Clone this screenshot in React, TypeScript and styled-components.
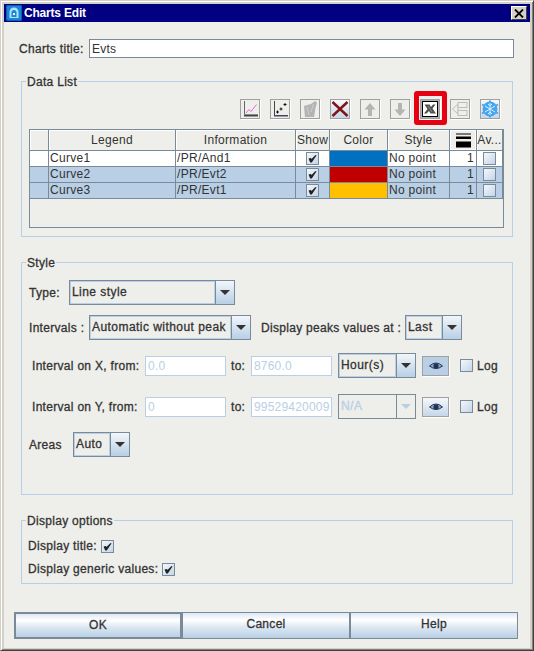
import React from "react";
import styled, { createGlobalStyle } from "styled-components";

const GlobalStyle = createGlobalStyle`
  html, body {
    margin: 0;
    padding: 0;
    background: #d4d0c8;
  }
  body {
    font-family: "Liberation Sans", Arial, sans-serif;
    font-size: 12px;
    color: #333333;
  }
`;

const BORDER = "#7a8a99";
const PALE = "#b8cfe5";
const LABEL = "-webkit-text-stroke: 0.3px #333333; letter-spacing: 0.3px;";

/* window frame */

const Frame = styled.div`
  box-sizing: border-box;
  width: 534px;
  height: 651px;
  display: flex;
  flex-direction: column;
  padding: 3px 3px 2px 3px;
  background: #d4d0c8;
  border-top: 1px solid #d4d0c8;
  border-left: 1px solid #d4d0c8;
  border-right: 1px solid #404040;
  border-bottom: 1px solid #404040;
  box-shadow: inset 1px 1px 0 #ffffff, inset -1px -1px 0 #808080;
`;

const TitleBar = styled.div`
  height: 18px;
  flex: none;
  display: flex;
  align-items: center;
  padding: 0 3px 0 2px;
  gap: 2px;
  background: #000080;
  color: #ffffff;
  font-weight: bold;
  font-size: 12px;
  letter-spacing: -0.2px;
`;

const TitleText = styled.span`
  flex: 1;
`;

const CloseBox = styled.div`
  width: 16px;
  height: 14px;
  box-sizing: border-box;
  background: #d4d0c8;
  border: 1px solid;
  border-color: #ffffff #404040 #404040 #ffffff;
  display: flex;
  align-items: center;
  justify-content: center;
`;

const Body = styled.div`
  flex: 1;
  display: flex;
  flex-direction: column;
  background: #eeefea;
  padding: 17px 12px 0 12px;
`;

/* shared controls */

const Label = styled.span<{ $w?: number; $ml?: number }>`
  ${LABEL}
  white-space: nowrap;
  margin-left: ${(p) => p.$ml ?? 0}px;
  ${(p) => (p.$w ? `width: ${p.$w}px; flex: none;` : "")}
`;

const TextField = styled.div<{ $w?: number; $off?: boolean }>`
  box-sizing: border-box;
  height: ${(p) => (p.$off ? 20 : 19)}px;
  ${(p) => (p.$w ? `width: ${p.$w}px; flex: none;` : "flex: 1;")}
  padding-left: 2px;
  line-height: 18px;
  background: #ffffff;
  overflow: hidden;
  white-space: nowrap;
  letter-spacing: 0.2px;
  color: ${(p) => (p.$off ? PALE : "#333333")};
  border: 1px solid ${(p) => (p.$off ? PALE : BORDER)};
`;

const Combo = styled.div<{ $w: number; $btn?: number; $ml?: number }>`
  box-sizing: border-box;
  width: ${(p) => p.$w}px;
  height: 25px;
  flex: none;
  margin-left: ${(p) => p.$ml ?? 0}px;
  display: grid;
  grid-template-columns: 1fr ${(p) => p.$btn ?? 19}px;
  border: 1px solid ${BORDER};
  background: #eeefea;
`;

const ComboText = styled.div<{ $off?: boolean }>`
  ${LABEL}
  letter-spacing: 0.45px;
  padding-left: 1px;
  line-height: 21px;
  overflow: hidden;
  white-space: nowrap;
  border: 1px solid ${(p) => (p.$off ? "#eeefea" : PALE)};
  color: ${(p) => (p.$off ? PALE : "#333333")};
  -webkit-text-stroke-color: ${(p) => (p.$off ? PALE : "#333333")};
`;

const ComboArrow = styled.div<{ $off?: boolean }>`
  border-left: 1px solid ${BORDER};
  display: flex;
  align-items: center;
  justify-content: center;
  background: ${(p) =>
    p.$off ? "#eeefea" : "linear-gradient(#f2f6fa, #b8cfe5)"};
  &::after {
    content: "";
    border-left: 5px solid transparent;
    border-right: 5px solid transparent;
    border-top: 5px solid ${(p) => (p.$off ? PALE : "#333333")};
  }
`;

const CheckBox = styled.div<{ $ml?: number }>`
  box-sizing: border-box;
  width: 13px;
  height: 13px;
  flex: none;
  margin-left: ${(p) => p.$ml ?? 0}px;
  border: 1px solid ${BORDER};
  background: linear-gradient(135deg, #f4f7fb, #c4d5e8);
  display: flex;
  align-items: center;
  justify-content: center;
`;

const Group = styled.fieldset<{ $h: number; $mt?: number }>`
  box-sizing: border-box;
  height: ${(p) => p.$h}px;
  flex: none;
  margin: ${(p) => p.$mt ?? 0}px 0 0 5px;
  width: 492px;
  padding: 0;
  min-width: 0;
  border: 1px solid ${PALE};
  position: relative;
`;

const GroupTitle = styled.legend`
  ${LABEL}
  padding: 0 1px;
  margin-left: 4px;
  line-height: 16px;
  height: 14px;
`;

/* charts title */

const TitleRow = styled.div`
  display: flex;
  align-items: center;
  height: 19px;
  margin: 0 4px 16px 3px;
`;

/* data list */

const Toolbar = styled.div`
  display: flex;
  justify-content: flex-end;
  gap: 10px;
  height: 20px;
  margin: 11px 12px 10px 0;
  position: relative;
`;

const ToolButton = styled.div<{ $bg?: "flat" | "shade" | "dark" }>`
  box-sizing: border-box;
  width: 20px;
  height: 20px;
  flex: none;
  background: ${(p) =>
    p.$bg === "dark"
      ? "#b0b0b0"
      : p.$bg === "shade"
        ? "linear-gradient(#f6f8fb, #c6d7e9)"
        : "#eeefea"};
  border: 1px solid #a0a0a0;
  box-shadow: 1px 1px 0 #ffffff;
  display: flex;
  align-items: center;
  justify-content: center;
`;

const Highlight = styled.div`
  position: absolute;
  box-sizing: border-box;
  top: -8px;
  right: 53px;
  width: 33px;
  height: 34px;
  border: 5px solid #e60012;
  border-radius: 3px;
`;

const Table = styled.div`
  box-sizing: border-box;
  margin-left: 7px;
  width: 475px;
  height: 99px;
  border: 1px solid ${BORDER};
  background: #eeefea;
`;

const COLUMNS = "19px 127px 120px 34px 58px 62px 27px 26px";

const HeadRow = styled.div`
  display: grid;
  grid-template-columns: ${COLUMNS};
  height: 20px;
  border-bottom: 1px solid ${BORDER};
`;

const HeadCell = styled.div`
  box-sizing: border-box;
  border-right: 1px solid ${BORDER};
  background: #eeefea;
  box-shadow: inset 1px 1px 0 #ffffff;
  text-align: center;
  line-height: 21px;
  white-space: nowrap;
  overflow: hidden;
  letter-spacing: 0.3px;
`;

const WidthHead = styled(HeadCell)`
  display: flex;
  align-items: center;
  justify-content: center;
  box-shadow: inset 0 0 0 1px #ffffff;
`;

const DataRow = styled.div<{ $sel?: boolean }>`
  display: grid;
  grid-template-columns: ${COLUMNS};
  height: 16px;
  box-sizing: border-box;
  border-bottom: 1px solid ${BORDER};
  background: ${(p) => (p.$sel ? PALE : "#ffffff")};
`;

const Cell = styled.div<{ $right?: boolean; $center?: boolean }>`
  box-sizing: border-box;
  border-right: 1px solid ${BORDER};
  line-height: 15px;
  overflow: hidden;
  white-space: nowrap;
  padding: 0 1px;
  letter-spacing: 0.3px;
  ${(p) => (p.$right ? "text-align: right; padding-right: 2px;" : "")}
  ${(p) =>
    p.$center
      ? "display: flex; align-items: center; justify-content: center;"
      : ""}
`;

const Swatch = styled.div<{ $color: string }>`
  box-sizing: border-box;
  border-right: 1px solid ${BORDER};
  background: ${(p) => p.$color};
`;

/* style group */

const StyleRow = styled.div<{ $mt?: number; $mb: number; $pl?: number }>`
  display: flex;
  align-items: center;
  height: 25px;
  margin: ${(p) => p.$mt ?? 0}px 0 ${(p) => p.$mb}px ${(p) => p.$pl ?? 7}px;
`;

const EyeButton = styled.div<{ $active?: boolean }>`
  box-sizing: border-box;
  width: 27px;
  height: 20px;
  flex: none;
  margin-left: 6px;
  border: 1px solid #a0a0a0;
  box-shadow: 1px 1px 0 #ffffff;
  background: ${(p) =>
    p.$active ? PALE : "linear-gradient(#f4f7fb, #c6d7e9)"};
  display: flex;
  align-items: center;
  justify-content: center;
`;

const OptionRow = styled.div<{ $mt?: number; $mb: number }>`
  display: flex;
  align-items: center;
  gap: 4px;
  height: 14px;
  margin: ${(p) => p.$mt ?? 0}px 0 ${(p) => p.$mb}px 6px;
`;

/* bottom buttons */

const Buttons = styled.div`
  display: grid;
  grid-template-columns: 168px 168px 168px;
  margin: 28px 0 0 -2px;
  height: 25px;
`;

const Action = styled.div<{ $focus?: boolean }>`
  ${LABEL}
  box-sizing: border-box;
  border: ${(p) => (p.$focus ? 2 : 1)}px solid ${BORDER};
  background: linear-gradient(#dde8f3 0%, #ffffff 28%, #dfe9f3 55%, #b8cfe5 100%);
  text-align: center;
  line-height: 23px;
`;

/* drawings */

const Check = () => (
  <svg width="9" height="9" viewBox="0 0 9 9">
    <path d="M0.5 4.5 L3 4 L3.5 5 L7.5 1 L8.5 1.5 L3.8 8.5 L2.2 8.5 Z" fill="#222222" />
  </svg>
);

const Eye = () => (
  <svg width="14" height="8" viewBox="0 0 14 8">
    <path d="M0.5 4 Q7 -2 13.5 4 Q7 9 0.5 4 Z" fill="#8fa8c4" stroke="#223355" strokeWidth="1" />
    <circle cx="7" cy="4" r="2.6" fill="#223355" />
  </svg>
);

const AppIcon = () => (
  <svg width="16" height="16" viewBox="0 0 16 16">
    <rect width="16" height="16" rx="2" fill="#1b86d6" />
    <rect x="0.5" y="0.5" width="15" height="15" rx="2" fill="none" stroke="#0b5fa8" />
    <path d="M3.5 13 V7 A4.5 4.5 0 0 1 12.5 7 V13 Z" fill="#a9e2fb" />
    <path d="M5.5 12 V7.5 A2.5 2.5 0 0 1 10.5 7.5 V12 Z" fill="#1b86d6" />
    <rect x="7" y="8" width="2" height="2" fill="#ffffff" />
  </svg>
);

const CloseGlyph = () => (
  <svg width="10" height="9" viewBox="0 0 10 9">
    <path d="M1 0.5 L9 8.5 M9 0.5 L1 8.5" stroke="#000000" strokeWidth="1.8" />
  </svg>
);

const LineChart = () => (
  <svg width="18" height="18" viewBox="0 0 18 18">
    <rect x="3" y="1" width="1" height="15" fill="#666666" />
    <rect x="3" y="14" width="14" height="1" fill="#8a8a8a" />
    <rect x="3" y="15" width="14" height="1.5" fill="#444444" />
    <path d="M5 13 L8 9.5 L10 11.5 L15.5 4.5" stroke="#f060e0" strokeWidth="1" fill="none" />
  </svg>
);

const PointChart = () => (
  <svg width="18" height="18" viewBox="0 0 18 18">
    <rect x="3" y="1" width="1" height="15" fill="#444444" />
    <rect x="3" y="15" width="14" height="1.5" fill="#444466" />
    <path
      d="M5 12h3M6.5 10.5v3M8.5 9h3M10 7.5v3M12.5 4.5h3M14 3v3"
      stroke="#111111"
      strokeWidth="1"
      fill="none"
    />
  </svg>
);

const Pencil = () => (
  <svg width="18" height="18" viewBox="0 0 18 18">
    <path d="M3 6 L10 4 L14 1 L16 2.5 L14.5 8 L13 17 L4 17 Z" fill="#b4b4b4" />
    <path d="M6 7 L8 15 M12.5 4 L10 12" stroke="#cfcfcf" fill="none" />
  </svg>
);

const RedCross = () => (
  <svg width="18" height="18" viewBox="0 0 18 18">
    <path d="M1.5 2 L16.5 16 M16.5 2 L1.5 16" stroke="#7e1414" strokeWidth="2.4" />
  </svg>
);

const ArrowUp = () => (
  <svg width="14" height="15" viewBox="0 0 14 15">
    <path d="M7 1 L12.5 7.5 H9 V14 H5 V7.5 H1.5 Z" fill="#b4b4b4" />
  </svg>
);

const ArrowDown = () => (
  <svg width="14" height="15" viewBox="0 0 14 15">
    <path d="M7 14 L12.5 7.5 H9 V1 H5 V7.5 H1.5 Z" fill="#b4b4b4" />
  </svg>
);

const ExportIcon = () => (
  <svg width="16" height="16" viewBox="0 0 16 16">
    <rect x="0.5" y="0.5" width="15" height="15" fill="#ffffff" stroke="#000000" />
    <path d="M2.5 3.5 H7.5 L9 6 L11 3.5 H13.5 L10.5 7.5 L14 12.5 H8.5 L7 10 L4.5 12.5 H2 L5.5 8 Z" fill="#4f4f4f" />
    <path d="M6 5 L10 11" stroke="#808080" strokeWidth="1.2" />
  </svg>
);

const ImportIcon = () => (
  <svg width="18" height="18" viewBox="0 0 18 18">
    <path d="M1.5 9 L7 4 V14 Z" fill="none" stroke="#bdbdbd" />
    <rect x="7" y="2.5" width="9" height="5" fill="#eeefea" stroke="#bdbdbd" />
    <rect x="7" y="10.5" width="9" height="5" fill="#eeefea" stroke="#bdbdbd" />
  </svg>
);

const Snowflake = () => (
  <svg width="18" height="18" viewBox="0 0 18 18">
    <circle cx="9" cy="9" r="7.5" fill="#45a6ee" />
    <path
      d="M9 0.5 V17.5 M1 4.5 L17 13.5 M17 4.5 L1 13.5"
      stroke="#45a6ee"
      strokeWidth="2"
      fill="none"
    />
    <path
      d="M9 3 V15 M4 6 L14 12 M14 6 L4 12 M7 4 L9 6 L11 4 M7 14 L9 12 L11 14"
      stroke="#d5efff"
      strokeWidth="1"
      fill="none"
    />
  </svg>
);

const WidthGlyph = () => (
  <svg width="15" height="15" viewBox="0 0 15 15">
    <rect x="0" y="0.5" width="15" height="1" fill="#000000" />
    <rect x="0" y="3.5" width="15" height="2.5" fill="#000000" />
    <rect x="0" y="8.5" width="15" height="6" fill="#000000" />
  </svg>
);

const rows = [
  { legend: "Curve1", info: "/PR/And1", color: "#0070c0", sel: false },
  { legend: "Curve2", info: "/PR/Evt2", color: "#c00000", sel: true },
  { legend: "Curve3", info: "/PR/Evt1", color: "#ffc000", sel: true },
];

export default function App() {
  return (
    <>
      <GlobalStyle />
      <Frame>
        <TitleBar>
          <AppIcon />
          <TitleText>Charts Edit</TitleText>
          <CloseBox>
            <CloseGlyph />
          </CloseBox>
        </TitleBar>
        <Body>
          <TitleRow>
            <Label $w={70}>Charts title:</Label>
            <TextField>Evts</TextField>
          </TitleRow>

          <Group $h={163}>
            <GroupTitle>Data List</GroupTitle>
            <Toolbar>
              <ToolButton><LineChart /></ToolButton>
              <ToolButton><PointChart /></ToolButton>
              <ToolButton><Pencil /></ToolButton>
              <ToolButton $bg="shade"><RedCross /></ToolButton>
              <ToolButton><ArrowUp /></ToolButton>
              <ToolButton><ArrowDown /></ToolButton>
              <ToolButton $bg="dark"><ExportIcon /></ToolButton>
              <ToolButton><ImportIcon /></ToolButton>
              <ToolButton $bg="shade"><Snowflake /></ToolButton>
              <Highlight />
            </Toolbar>
            <Table>
              <HeadRow>
                <HeadCell />
                <HeadCell>Legend</HeadCell>
                <HeadCell>Information</HeadCell>
                <HeadCell>Show</HeadCell>
                <HeadCell>Color</HeadCell>
                <HeadCell>Style</HeadCell>
                <WidthHead><WidthGlyph /></WidthHead>
                <HeadCell>Av...</HeadCell>
              </HeadRow>
              {rows.map((r) => (
                <DataRow key={r.legend} $sel={r.sel}>
                  <Cell />
                  <Cell>{r.legend}</Cell>
                  <Cell>{r.info}</Cell>
                  <Cell $center>
                    <CheckBox><Check /></CheckBox>
                  </Cell>
                  <Swatch $color={r.color} />
                  <Cell>No point</Cell>
                  <Cell $right>1</Cell>
                  <Cell $center>
                    <CheckBox />
                  </Cell>
                </DataRow>
              ))}
            </Table>
          </Group>

          <Group $h={240} $mt={18}>
            <GroupTitle>Style</GroupTitle>
            <StyleRow $mt={11} $mb={10}>
              <Label $w={40}>Type:</Label>
              <Combo $w={166}>
                <ComboText>Line style</ComboText>
                <ComboArrow />
              </Combo>
            </StyleRow>
            <StyleRow $mb={13}>
              <Label $w={60}>Intervals :</Label>
              <Combo $w={162}>
                <ComboText>Automatic without peak</ComboText>
                <ComboArrow />
              </Combo>
              <Label $w={144} $ml={10}>Display peaks values at :</Label>
              <Combo $w={57}>
                <ComboText>Last</ComboText>
                <ComboArrow />
              </Combo>
            </StyleRow>
            <StyleRow $mb={16} $pl={10}>
              <Label $w={113}>Interval on X, from:</Label>
              <TextField $w={81} $off>0.0</TextField>
              <Label $w={20} $ml={5}>to:</Label>
              <TextField $w={81} $off>8760.0</TextField>
              <Combo $w={78} $ml={6}>
                <ComboText>Hour(s)</ComboText>
                <ComboArrow />
              </Combo>
              <EyeButton $active><Eye /></EyeButton>
              <CheckBox $ml={11} />
              <Label $ml={4}>Log</Label>
            </StyleRow>
            <StyleRow $mb={13} $pl={10}>
              <Label $w={113}>Interval on Y, from:</Label>
              <TextField $w={81} $off>0</TextField>
              <Label $w={20} $ml={5}>to:</Label>
              <TextField $w={81} $off>99529420009</TextField>
              <Combo $w={78} $ml={6}>
                <ComboText $off>N/A</ComboText>
                <ComboArrow $off />
              </Combo>
              <EyeButton><Eye /></EyeButton>
              <CheckBox $ml={11} />
              <Label $ml={4}>Log</Label>
            </StyleRow>
            <StyleRow $mb={0}>
              <Label $w={44}>Areas</Label>
              <Combo $w={57}>
                <ComboText>Auto</ComboText>
                <ComboArrow />
              </Combo>
            </StyleRow>
          </Group>

          <Group $h={71} $mt={18}>
            <GroupTitle>Display options</GroupTitle>
            <OptionRow $mt={12} $mb={9}>
              <Label>Display title:</Label>
              <CheckBox><Check /></CheckBox>
            </OptionRow>
            <OptionRow $mb={0}>
              <Label>Display generic values:</Label>
              <CheckBox><Check /></CheckBox>
            </OptionRow>
          </Group>

          <Buttons>
            <Action $focus>OK</Action>
            <Action>Cancel</Action>
            <Action>Help</Action>
          </Buttons>
        </Body>
      </Frame>
    </>
  );
}
